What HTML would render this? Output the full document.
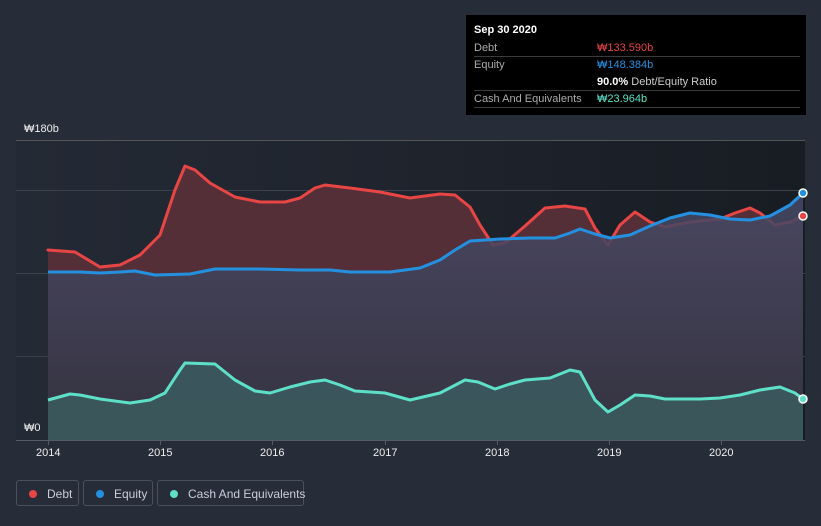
<!DOCTYPE html>
<html><head><meta charset="utf-8"><style>
html,body{margin:0;background:#262c38;width:821px;height:526px;overflow:hidden;font-family:"Liberation Sans","Noto Sans CJK KR",sans-serif;position:relative}
.tt{position:absolute;left:466px;top:15px;width:340px;height:100px;background:#000;color:#fff;font-size:11px}
.tt .r{position:absolute;left:8px;right:6px;border-bottom:1px solid #3a3a3a;height:16px;line-height:16px;color:#aaa}
.tt .v{position:absolute;left:123px;top:0}
.leg{position:absolute;top:480px;height:26px;border:1px solid #4a515c;border-radius:3px;color:#ccd;font-size:12px;line-height:26px;box-sizing:border-box;white-space:nowrap}
.leg i{position:absolute;left:12px;top:9px;width:8px;height:8px;border-radius:50%}
.leg span{position:absolute;left:30px;white-space:nowrap}
.ax{position:absolute;color:#eee;font-size:11px}
</style></head><body>
<svg width="821" height="526" style="position:absolute;left:0;top:0">
<defs><linearGradient id="bg" x1="0" x2="1"><stop offset="0" stop-color="#242a35"/><stop offset="0.55" stop-color="#1e232c"/><stop offset="1" stop-color="#181c23"/></linearGradient>
<linearGradient id="eq" x1="0" y1="0" x2="0" y2="1"><stop offset="0" stop-color="#474a68" stop-opacity="0.85"/><stop offset="1" stop-color="#30333f" stop-opacity="0.9"/></linearGradient></defs>
<rect x="16" y="140" width="789" height="300" fill="url(#bg)"/>
<g stroke="#3c424c" stroke-width="1"><line x1="16" y1="140.5" x2="805" y2="140.5" stroke="#555"/><line x1="16" y1="190.5" x2="805" y2="190.5"/><line x1="16" y1="273.5" x2="805" y2="273.5"/><line x1="16" y1="356.5" x2="805" y2="356.5"/></g>
<path d="M48,250 L75,252 100,267 120,265 140,255 160,235 175,190 185,166 195,170 210,183 235,197 260,202 285,202 300,198 315,188 325,185 350,188 380,192 410,198 440,194 455,195 470,207 480,225 493,245 505,243 525,226 545,208 565,206 585,209 595,228 608,245 620,225 635,212 650,222 665,227 690,222 720,219 735,213 750,208 760,213 775,225 790,222 803,216 L803,440 48,440Z" fill="#552f38"/>
<path d="M48,250 L75,252 100,267 120,265 140,255 160,235 175,190 185,166 195,170 210,183 235,197 260,202 285,202 300,198 315,188 325,185 350,188 380,192 410,198 440,194 455,195 470,207 480,225 493,245 505,243 525,226 545,208 565,206 585,209 595,228 608,245 620,225 635,212 650,222 665,227 690,222 720,219 735,213 750,208 760,213 775,225 790,222 803,216" fill="none" stroke="#e84545" stroke-width="3" stroke-linejoin="round" stroke-linecap="round"/>
<path d="M48,272 L80,272 100,273 120,272 135,271 155,275 190,274 215,269 260,269 300,270 330,270 350,272 390,272 420,268 440,260 455,250 470,241 500,239 530,238 555,238 570,233 580,229 595,234 610,238 630,235 650,226 670,218 690,213 710,215 730,219 750,220 770,216 790,205 803,193 L803,440 48,440Z" fill="url(#eq)"/>
<path d="M48,272 L80,272 100,273 120,272 135,271 155,275 190,274 215,269 260,269 300,270 330,270 350,272 390,272 420,268 440,260 455,250 470,241 500,239 530,238 555,238 570,233 580,229 595,234 610,238 630,235 650,226 670,218 690,213 710,215 730,219 750,220 770,216 790,205 803,193" fill="none" stroke="#2491e0" stroke-width="3" stroke-linejoin="round"/>
<path d="M48,400 L70,394 80,395 100,399 130,403 150,400 165,393 180,370 185,363 215,364 235,380 255,391 270,393 290,387 310,382 325,380 340,385 355,391 385,393 410,400 440,393 465,380 478,382 495,389 510,384 525,380 550,378 570,370 580,372 595,400 608,412 620,405 635,395 650,396 665,399 700,399 720,398 740,395 760,390 780,387 795,393 803,399 L803,440 48,440Z" fill="#3b5a5e" fill-opacity="0.9"/>
<path d="M48,400 L70,394 80,395 100,399 130,403 150,400 165,393 180,370 185,363 215,364 235,380 255,391 270,393 290,387 310,382 325,380 340,385 355,391 385,393 410,400 440,393 465,380 478,382 495,389 510,384 525,380 550,378 570,370 580,372 595,400 608,412 620,405 635,395 650,396 665,399 700,399 720,398 740,395 760,390 780,387 795,393 803,399" fill="none" stroke="#5ee0c8" stroke-width="3" stroke-linejoin="round"/>
<circle cx="803" cy="193" r="4" fill="#2491e0" stroke="#fff" stroke-width="1.5"/>
<circle cx="803" cy="216" r="4" fill="#e84545" stroke="#fff" stroke-width="1.5"/>
<circle cx="803" cy="399" r="4" fill="#5ee0c8" stroke="#fff" stroke-width="1.5"/>
<line x1="16" y1="440.5" x2="805" y2="440.5" stroke="#555b66"/>
<g stroke="#555b66"><line x1="48.5" y1="440" x2="48.5" y2="445"/><line x1="160.5" y1="440" x2="160.5" y2="445"/><line x1="272.5" y1="440" x2="272.5" y2="445"/><line x1="385.5" y1="440" x2="385.5" y2="445"/><line x1="497.5" y1="440" x2="497.5" y2="445"/><line x1="609.5" y1="440" x2="609.5" y2="445"/><line x1="721.5" y1="440" x2="721.5" y2="445"/></g>
</svg>
<div class="ax" style="left:24px;top:123px">₩180b</div>
<div class="ax" style="left:24px;top:422px">₩0</div>
<div class="ax" style="left:36px;top:447px">2014</div>
<div class="ax" style="left:148px;top:447px">2015</div>
<div class="ax" style="left:260px;top:447px">2016</div>
<div class="ax" style="left:373px;top:447px">2017</div>
<div class="ax" style="left:485px;top:447px">2018</div>
<div class="ax" style="left:597px;top:447px">2019</div>
<div class="ax" style="left:709px;top:447px">2020</div>
<div class="tt">
<div style="position:absolute;left:8px;top:9px;font-weight:bold;color:#fff">Sep 30 2020</div>
<div class="r" style="top:25px">Debt<span class="v" style="color:#e84545">₩133.590b</span></div>
<div class="r" style="top:42px;border:none">Equity<span class="v" style="color:#2491e0">₩148.384b</span></div>
<div class="r" style="top:59px"><span class="v" style="color:#ccc"><b style="color:#fff">90.0%</b> Debt/Equity Ratio</span></div>
<div class="r" style="top:76px">Cash And Equivalents<span class="v" style="color:#5ee0c8">₩23.964b</span></div>
</div>
<div class="leg" style="left:16px;width:63px"><i style="background:#e84545"></i><span>Debt</span></div>
<div class="leg" style="left:83px;width:70px"><i style="background:#2491e0"></i><span>Equity</span></div>
<div class="leg" style="left:157px;width:147px"><i style="background:#5ee0c8"></i><span>Cash And Equivalents</span></div>
</body></html>
